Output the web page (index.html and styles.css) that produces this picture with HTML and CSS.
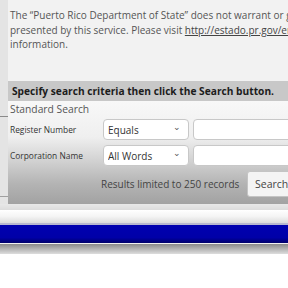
FILE: index.html
```html
<!DOCTYPE html>
<html lang="en">
<head>
  <meta charset="UTF-8">
  <meta name="viewport" content="width=device-width, initial-scale=1.0">
  <title>Corporation Search</title>
  <link rel="stylesheet" href="styles.css">
</head>
<body>
  <div class="page">
    <div class="side">
      <div class="side-top"></div>
      <div class="side-mid"></div>
    </div>
    <div class="content">
      <div class="notice">
        <p>The “Puerto Rico Department of State” does not warrant or guarantee the accuracy of the data<br>
        presented by this service. Please visit <a href="#">http://estado.pr.gov/en/</a> for more<br>
        information.</p>
      </div>
      <div class="search-head">Specify search criteria then click the Search button.</div>
      <form class="search-body">
        <div class="search-title">Standard Search</div>
        <div class="search-row">
          <label for="regMode">Register Number</label>
          <div class="select-wrap">
            <select id="regMode">
              <option>Equals</option>
              <option>Starts With</option>
            </select>
            <span class="chevron">&#8964;</span>
          </div>
          <input type="text" id="regNumber">
        </div>
        <div class="search-row">
          <label for="nameMode">Corporation Name</label>
          <div class="select-wrap">
            <select id="nameMode">
              <option>All Words</option>
              <option>Any Word</option>
              <option>Exact Phrase</option>
            </select>
            <span class="chevron">&#8964;</span>
          </div>
          <input type="text" id="corpName">
        </div>
        <div class="search-foot">
          <span class="limit">Results limited to 250 records</span>
          <button type="button" class="search-btn">Search</button>
        </div>
      </form>
    </div>
  </div>
  <div class="footer">
    <div class="band-light"></div>
    <div class="band-white"></div>
    <div class="band-blue"></div>
    <div class="band-gray"></div>
  </div>
</body>
</html>
```

FILE: styles.css
```css
body {
  margin: 0;
  background-color: #ffffff;
  font-family: "Open Sans", Arial, sans-serif;
  overflow: hidden;
}

.page {
  display: flex;
  height: 204px;
  width: 360px;
}

.side {
  flex: 0 0 8px;
  background-color: #e4e4e4;
  display: flex;
  flex-direction: column;
}

.side-top {
  height: 116px;
  border-bottom: 1px solid #8a8a8a;
}

.side-mid {
  height: 79px;
  border-bottom: 1px solid #a0a0a0;
}

.content {
  flex: 1;
  min-width: 0;
  display: flex;
  flex-direction: column;
}

.notice {
  height: 81px;
  background-color: #f2f2f2;
  box-sizing: border-box;
  padding: 8px 0 0 2px;
}

.notice p {
  margin: 0;
  font-size: 10px;
  line-height: 14.5px;
  color: #555555;
  white-space: nowrap;
}

.notice a {
  color: #444444;
}

.search-head {
  height: 20px;
  line-height: 20px;
  background-color: #c8c8c8;
  padding-left: 4px;
  font-size: 10.2px;
  font-weight: bold;
  color: #1c1c1c;
  white-space: nowrap;
}

.search-body {
  flex: 1;
  margin: 0;
  padding: 0 0 0 2px;
  background: linear-gradient(#f8f8f8 0%, #efefef 35%, #cfcfcf 60%, #b4b4b4 80%, #a2a2a2 100%);
}

.search-title {
  font-size: 10.3px;
  line-height: 16px;
  color: #555555;
}

.search-row {
  display: grid;
  grid-template-columns: 89px 86px 120px;
  column-gap: 4px;
  align-items: center;
  margin-top: 2px;
  margin-bottom: 5px;
}

.search-row label {
  font-size: 8.4px;
  color: #333333;
}

.select-wrap {
  position: relative;
}

.select-wrap select {
  width: 86px;
  height: 21px;
  border: 1px solid #c8c8c8;
  border-radius: 4px;
  background-color: #ffffff;
  font-family: "Open Sans", Arial, sans-serif;
  font-size: 10px;
  color: #333333;
  padding: 0 0 0 4px;
  appearance: none;
  -webkit-appearance: none;
  display: block;
}

.chevron {
  position: absolute;
  right: 8px;
  top: 2px;
  font-size: 9px;
  line-height: 12px;
  color: #555555;
  pointer-events: none;
}

.search-row input {
  height: 21px;
  border: 1px solid #c8c8c8;
  border-radius: 4px;
  background-color: #ffffff;
  box-sizing: border-box;
  display: block;
}

.search-foot {
  display: flex;
  align-items: center;
  margin-top: 1px;
}

.limit {
  margin-left: 91px;
  font-size: 10px;
  color: #444444;
  width: 146px;
  white-space: nowrap;
}

.search-btn {
  height: 26px;
  padding: 0 7px;
  border: 1px solid #c4c4c4;
  border-radius: 3px;
  background-color: #f4f4f4;
  font-family: "Open Sans", Arial, sans-serif;
  font-size: 10.5px;
  color: #444444;
}

.footer {
  display: flex;
  flex-direction: column;
}

.band-light {
  height: 6px;
  background: linear-gradient(#e8e8e8, #dcdcdc);
}

.band-white {
  height: 13px;
  background: linear-gradient(#ffffff, #f4f4f4 50%, #dcdcdc);
  border-bottom: 2px solid #b8b8d0;
}

.band-blue {
  height: 18px;
  background: linear-gradient(#0000b0, #0000a8 70%, #00006a);
  border-bottom: 1px solid #f0f0f0;
}

.band-gray {
  height: 10px;
  background: linear-gradient(#8a8a8a, #dddddd);
}
```
